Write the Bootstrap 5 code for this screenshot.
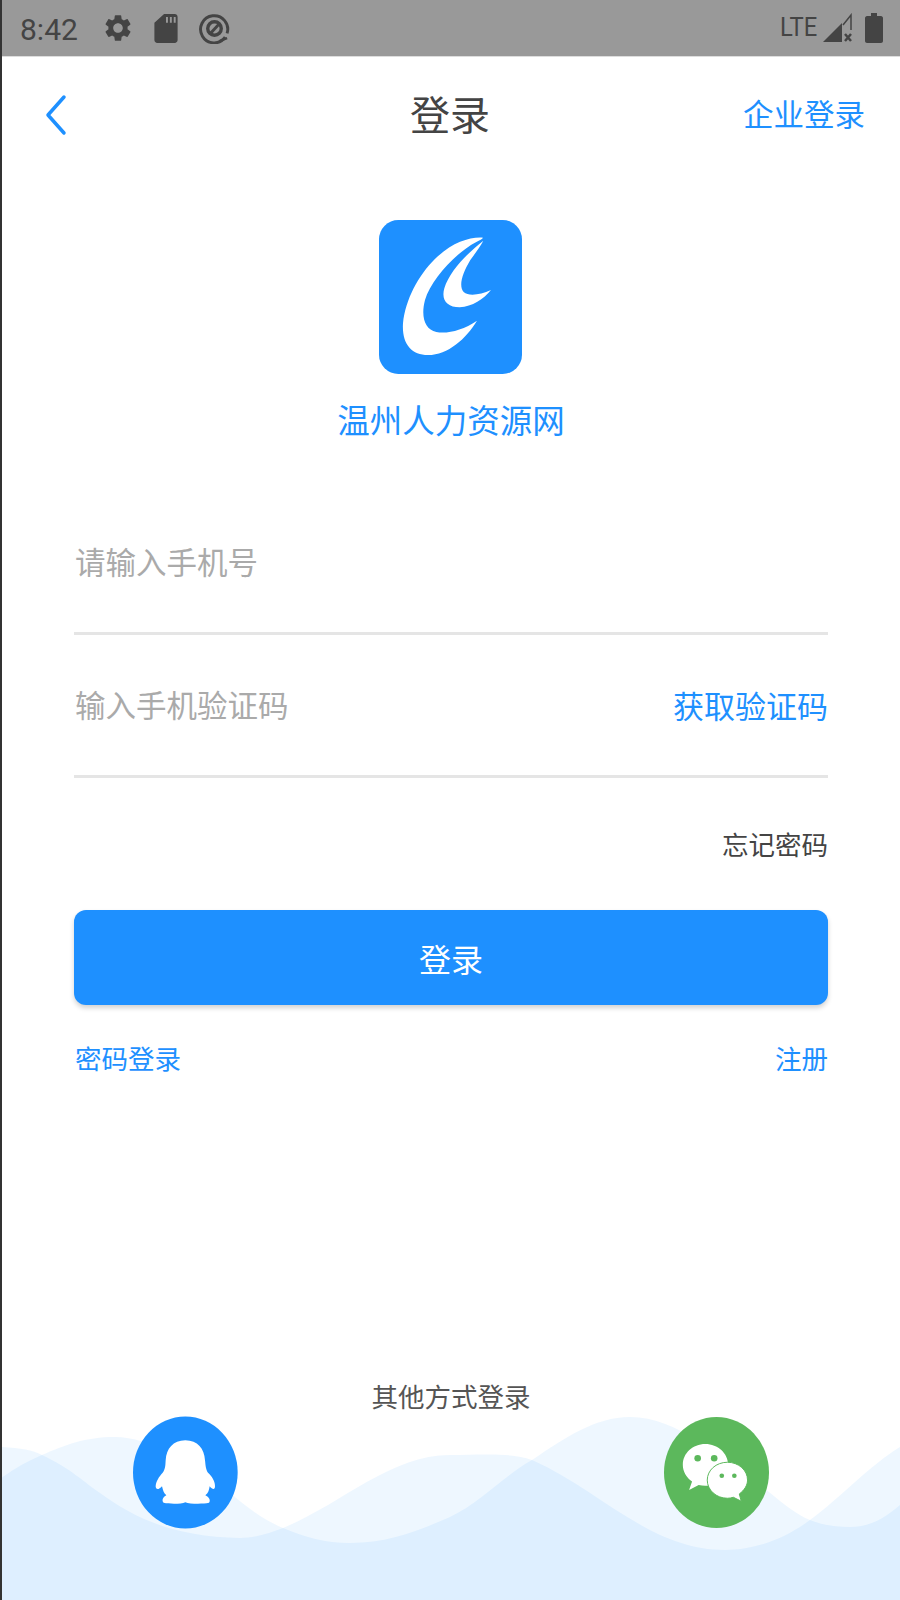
<!DOCTYPE html>
<html lang="zh-CN">
<head>
  <meta charset="UTF-8">
  <meta name="viewport" content="width=device-width, initial-scale=1.0">
  <title>登录</title>
  <link rel="stylesheet" href="https://cdn.jsdelivr.net/npm/bootstrap@5.3.0/dist/css/bootstrap.min.css">
  <style>
    html, body { background: #fff; }
    body { font-family: "Noto Sans CJK SC", "Liberation Sans", sans-serif; color: #444; }
    .app-frame { position: relative; width: 900px; height: 1600px; overflow: hidden; border-left: 2px solid #333; }
    .status-bar { height: 57px; background: #999; border-bottom: 1px solid #ddd; padding: 0 17px 0 18px; color: #444; font-family: Roboto, sans-serif; }
    .status-time { font-size: 30px; width: 82px; padding-top: 3px; }
    .status-sd { margin-left: 20px; margin-right: 21px; }
    .status-lte { font-size: 25px; margin-right: 5px; transform: scaleX(.95); transform-origin: right center; }
    .status-signal { margin-right: 12px; }
    .top-bar { height: 115px; padding: 0 35px 0 42px; }
    .top-back { width: 141px; }
    .top-side { width: 150px; }
    .top-title { font-size: 40px; color: #444; line-height: 1; padding-bottom: 4px; }
    .top-link { font-size: 30.5px; color: #1e90ff; line-height: 1; white-space: nowrap; padding-bottom: 2px; }
    .brand-logo { width: 143px; height: 154px; margin-top: 48px; margin-right: 2px; display: block; }
    .brand-name { font-size: 32.5px; color: #1e90ff; line-height: 46px; margin-top: 22px; height: 96px; }
    .login-form { padding: 0 72px 0 72px; }
    .field-row { height: 143px; border-bottom: 3px solid #e5e5e5; }
    .field-input.form-control { font-size: 30.5px; padding: 0 0 0 1px; border: 0; border-radius: 0; background: transparent; color: #444; box-shadow: none; }
    .field-input::placeholder { color: #aaa; opacity: 1; }
    .code-link { font-size: 31px; color: #1e90ff; white-space: nowrap; }
    .forgot-link { font-size: 26.5px; color: #444; line-height: 38px; margin-top: 47px; }
    .login-btn.btn { height: 95px; margin-top: 47px; background: #1e90ff; border: 0; border-radius: 12px; color: #fff; font-size: 32px; box-shadow: 0 3px 5px rgba(0,0,0,.18); }
    .extra-links { font-size: 26.5px; color: #1e90ff; line-height: 38px; margin-top: 34px; padding-left: 1px; }
    .other-area { position: absolute; left: 0; right: 0; top: 1377px; height: 223px; }
    .wave-bg { position: absolute; left: -2px; top: 0; width: 900px; height: 223px; }
    .other-title { position: relative; font-size: 26.5px; color: #555; line-height: 38px; margin-bottom: 1px; }
    .other-btns { position: relative; padding: 0 131px 0 131px; }
    .other-btns svg { width: 105px; height: 113px; display: block; }
  </style>
</head>
<body class="m-0">
  <div class="app-frame d-flex flex-column">
    <div class="status-bar d-flex align-items-center">
      <span class="status-time">8:42</span>
      <svg width="32" height="32" viewBox="0 0 24 24" fill="#444"><path d="M19.14 12.94c.04-.3.06-.61.06-.94 0-.32-.02-.64-.07-.94l2.03-1.58c.18-.14.23-.41.12-.61l-1.92-3.32c-.12-.22-.37-.29-.59-.22l-2.39.96c-.5-.38-1.03-.7-1.62-.94l-.36-2.54c-.04-.24-.24-.41-.48-.41h-3.84c-.24 0-.43.17-.47.41l-.36 2.54c-.59.24-1.13.57-1.62.94l-2.39-.96c-.22-.08-.47 0-.59.22L2.74 8.87c-.12.21-.08.47.12.61l2.03 1.58c-.05.3-.09.63-.09.94s.02.64.07.94l-2.03 1.58c-.18.14-.23.41-.12.61l1.92 3.32c.12.22.37.29.59.22l2.39-.96c.5.38 1.03.7 1.62.94l.36 2.54c.05.24.24.41.48.41h3.84c.24 0 .44-.17.47-.41l.36-2.54c.59-.24 1.13-.56 1.62-.94l2.39.96c.22.08.47 0 .59-.22l1.92-3.32c.12-.22.07-.47-.12-.61l-2.01-1.58zM12 15.6c-1.98 0-3.6-1.62-3.6-3.6s1.62-3.6 3.6-3.6 3.6 1.62 3.6 3.6-1.62 3.6-3.6 3.6z"/></svg>
      <svg class="status-sd" width="24" height="29" viewBox="0 0 24 30" fill="#444"><path d="M10 0h11c1.7 0 3 1.3 3 3v24c0 1.700-1.300 3-3 3H3c-1.700 0-3-1.300-3-3V9zM12 3v6h2V3zM16 3v6h2V3zM20 3v6h2V3z" fill-rule="evenodd"/></svg>
      <svg width="31" height="31" viewBox="0 0 32 32" fill="none" stroke="#444"><path d="M27 25A14 14 0 1 1 29 21" stroke-width="3"/><circle cx="16" cy="16" r="7" stroke-width="3.500"/><path d="M11 22L21 11" stroke-width="3"/><path d="M21 29l8-3" stroke-width="2.500"/></svg>
      <span class="status-lte ms-auto">LTE</span>
      <svg class="status-signal" width="31" height="30" viewBox="0 0 31 30"><path d="M21 12L29 2v15" fill="none" stroke="#444" stroke-width="1.500"/><path d="M1 29L20 10v19z" fill="#444"/><path d="M23 21l6 7m0-7l-6 7" stroke="#444" stroke-width="2.500"/></svg>
      <svg width="18" height="30" viewBox="0 0 18 30" fill="#444"><path d="M6 0h6v3h4c1 0 2 1 2 2v23c0 1-1 2-2 2H2c-1 0-2-1-2-2V5c0-1 1-2 2-2h4z"/></svg>
    </div>

    <div class="top-bar d-flex align-items-center justify-content-between">
      <div class="top-back">
        <svg width="24" height="42" viewBox="0 0 24 42" fill="none" stroke="#1e90ff" stroke-width="3.500" stroke-linecap="round" stroke-linejoin="round"><path d="M20 3L4 21l16 18"/></svg>
      </div>
      <div class="top-title">登录</div>
      <div class="top-side text-end top-link">企业登录</div>
    </div>

    <div class="d-flex flex-column align-items-center">
      <svg class="brand-logo" viewBox="178 60 429 462">
        <rect x="178" y="60" width="429" height="462" rx="58" fill="#1e90ff"/>
        <path fill="#fff" d="M490 113C450 110 395 128 345 178C295 228 258 298 250 370C246 430 275 465 325 465C385 465 440 415 472 362C430 390 385 402 350 396C315 388 303 350 316 300C334 240 405 160 470 126C480 120 488 118 490 113Z"/>
        <path fill="#fff" d="M491 122C445 158 390 212 374 265C364 300 382 322 420 322C458 320 492 297 514 270C482 284 448 290 432 276C416 258 428 220 452 180C467 160 481 140 491 122Z"/>
      </svg>
      <div class="brand-name">温州人力资源网</div>
    </div>

    <form class="login-form d-flex flex-column" onsubmit="return false">
      <div class="field-row d-flex align-items-center">
        <input type="text" class="form-control field-input" placeholder="请输入手机号">
      </div>
      <div class="field-row d-flex align-items-center">
        <input type="text" class="form-control field-input" placeholder="输入手机验证码">
        <span class="code-link">获取验证码</span>
      </div>
      <div class="forgot-link text-end">忘记密码</div>
      <button type="button" class="btn login-btn w-100">登录</button>
      <div class="extra-links d-flex justify-content-between">
        <span>密码登录</span>
        <span>注册</span>
      </div>
    </form>

    <div class="other-area">
      <svg class="wave-bg" viewBox="0 1377 900 223" preserveAspectRatio="none">
        <path fill="#1e90ff" fill-opacity=".075" d="M0 1447C20 1448 32 1450 42 1455C70 1468 85 1483 100 1493C130 1515 170 1537 240 1538C255 1538 270 1533 283 1528C340 1505 390 1455 450 1455C480 1455 510 1452 532 1460C600 1490 650 1550 725 1550C760 1550 790 1535 810 1520C840 1498 870 1465 900 1447V1600H0Z"/>
        <path fill="#1e90ff" fill-opacity=".075" d="M0 1479C15 1468 28 1461 42 1455C65 1445 85 1437 115 1437C150 1437 190 1462 235 1497C250 1510 268 1522 283 1528C305 1537 325 1543 350 1543C390 1543 420 1530 450 1517C480 1503 505 1475 532 1460C565 1438 595 1417 630 1417C680 1417 725 1462 769 1492C785 1505 797 1515 810 1520C822 1525 835 1527 850 1527C870 1527 885 1518 900 1505V1600H0Z"/>
      </svg>
      <div class="other-title text-center">其他方式登录</div>
      <div class="other-btns d-flex justify-content-between">
        <svg viewBox="400 229 315 336">
          <ellipse cx="557" cy="397" rx="157" ry="168" fill="#1e90ff"/>
          <path fill="#fff" d="M557 300C520 300 500 325 498 360C497 378 497 385 489 398C478 410 468 425 468 440C470 450 478 448 487 438C490 450 492 458 500 465C490 470 485 480 492 488C510 492 545 492 557 486C570 492 610 492 628 488C634 480 628 470 617 465C626 458 628 450 630 438C638 448 646 450 646 438C646 422 636 408 625 398C618 385 618 378 616 360C614 325 594 300 557 300Z"/>
        </svg>
        <svg viewBox="640 230 318 336">
          <ellipse cx="799" cy="398" rx="159" ry="168" fill="#5cb85c"/>
          <path fill="#fff" d="M765 312C727 312 697 340 697 375C697 395 708 413 725 425L716 451L745 436C752 437 758 438 765 438C800 438 834 410 834 375C834 340 803 312 765 312Z"/>
          <circle cx="742" cy="355" r="10" fill="#5cb85c"/>
          <circle cx="792" cy="355" r="10" fill="#5cb85c"/>
          <path fill="#fff" stroke="#5cb85c" stroke-width="3" d="M832 367C798 367 771 391 771 421C771 451 798 476 832 476C838 476 844 475 850 473L874 485L868 463C883 452 893 437 893 421C893 391 866 367 832 367Z"/>
          <circle cx="815" cy="408" r="7" fill="#5cb85c"/>
          <circle cx="853" cy="408" r="7" fill="#5cb85c"/>
        </svg>
      </div>
    </div>
  </div>
  <script src="https://cdn.jsdelivr.net/npm/bootstrap@5.3.0/dist/js/bootstrap.bundle.min.js"></script>
</body>
</html>
